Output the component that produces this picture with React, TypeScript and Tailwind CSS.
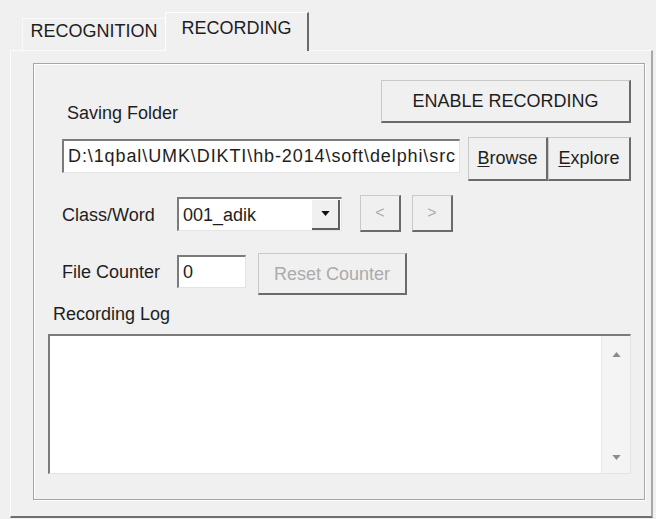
import type { ReactNode } from 'react'

// classic 3D bevels
const raised =
  'border border-t-[#c9c9c9] border-l-[#c9c9c9] border-r-2 border-b-2 border-r-[#6b6b6b] border-b-[#6b6b6b] bg-[#f0f0f0]'
const sunken =
  'border-t-2 border-l-2 border-r border-b border-t-[#7b7b7b] border-l-[#7b7b7b] border-r-[#e4e4e4] border-b-[#e4e4e4] bg-white'

type BtnProps = {
  children: ReactNode
  className?: string
  disabled?: boolean
}

function Btn({ children, className = '', disabled = false }: BtnProps) {
  return (
    <div
      className={`flex shrink-0 items-center justify-center leading-[20px] ${raised} ${
        disabled ? 'text-[#ababab]' : 'text-[#1e1e1e]'
      } ${className}`}
    >
      {children}
    </div>
  )
}

function Triangle({ up = false, className = '' }: { up?: boolean; className?: string }) {
  return (
    <svg viewBox="0 0 10 6" className={className}>
      <path d={up ? 'M0 6 L5 0 L10 6 Z' : 'M0 0 L10 0 L5 6 Z'} fill="currentColor" />
    </svg>
  )
}

export default function App() {
  return (
    <div className="h-[519px] w-[656px] overflow-hidden bg-[#f0f0f0] pt-[12px] pr-[3px] pb-[1px] pl-[10px] font-['Liberation_Sans',Arial,sans-serif] text-[18px] text-[#1e1e1e]">
      <div className="flex h-full flex-col">
        {/* Tab headers */}
        <div className="flex h-[38px] items-end pl-[12px]">
          <div className="flex h-[32px] w-[143px] justify-center border-t border-l border-t-[#fafafa] border-l-[#fafafa] pt-[2px] leading-[20px]">
            RECOGNITION
          </div>
          <div className="relative z-10 -mb-[1px] flex h-[39px] w-[144px] justify-center border-t border-l border-r-2 border-t-white border-l-white border-r-[#6b6b6b] bg-[#f0f0f0] pt-[5px] leading-[20px]">
            RECORDING
          </div>
        </div>

        {/* Tab page */}
        <div className="flex-1 border-t border-l border-r-2 border-b-2 border-t-[#fbfbfb] border-l-[#fbfbfb] border-r-[#a8a8a8] border-b-[#6e6e6e] pt-[12px] pr-[6px] pb-[16px] pl-[22px]">
          <div className="h-full border border-[#a6a6a6] pl-[14px] pr-[13px] shadow-[inset_1px_1px_0_#ffffff,1px_1px_0_#ffffff]">
            {/* Saving folder */}
            <div className="mt-[16px] flex items-start justify-between">
              <div className="mt-[23px] ml-[19px] leading-[20px]">Saving Folder</div>
              <Btn className="h-[43px] w-[250px]">ENABLE RECORDING</Btn>
            </div>

            <div className="mt-[14px] ml-[14px] flex items-start">
              <div className={`mt-[2px] flex h-[34px] w-[398px] items-center pb-[2px] pl-[4px] leading-[20px] tracking-[0.9px] ${sunken}`}>
                D:\1qbal\UMK\DIKTI\hb-2014\soft\delphi\src
              </div>
              <Btn className="ml-[8px] h-[44px] w-[80px] pb-[2px]">
                <span>
                  <u className="underline-offset-2">B</u>rowse
                </span>
              </Btn>
              <Btn className="h-[44px] w-[83px] pb-[2px]">
                <span>
                  <u className="underline-offset-2">E</u>xplore
                </span>
              </Btn>
            </div>

            {/* Class / word selector */}
            <div className="mt-[14px] ml-[14px] flex items-start">
              <div className="mt-[10px] w-[115px] leading-[20px]">Class/Word</div>
              <div className={`mt-[2px] flex h-[34px] w-[165px] items-center ${sunken}`}>
                <div className="flex-1 pl-[4px] leading-[20px]">001_adik</div>
                <div className="mr-[1px] flex h-[30px] w-[28px] items-center justify-center border-r-2 border-b-2 border-r-[#5f5f5f] border-b-[#5f5f5f] bg-[#f0f0f0]">
                  <Triangle className="h-[5px] w-[9px] text-[#111]" />
                </div>
              </div>
              <Btn disabled className="ml-[18px] h-[37px] w-[41px] text-[16px]">
                &lt;
              </Btn>
              <Btn disabled className="ml-[11px] h-[37px] w-[41px] text-[16px]">
                &gt;
              </Btn>
            </div>

            {/* File counter */}
            <div className="mt-[21px] ml-[14px] flex items-start">
              <div className="mt-[9px] w-[115px] leading-[20px]">File Counter</div>
              <div className={`mt-[2px] flex h-[33px] w-[69px] items-center pl-[4px] leading-[20px] ${sunken}`}>0</div>
              <Btn disabled className="ml-[12px] h-[42px] w-[149px]">
                Reset Counter
              </Btn>
            </div>

            {/* Log */}
            <div className="mt-[9px] ml-[5px] leading-[20px]">Recording Log</div>
            <div className={`mt-[10px] flex h-[140px] w-[583px] ${sunken}`}>
              <div className="flex-1" />
              <div className="flex w-[29px] flex-col items-center justify-between border-l border-l-[#e9e9e9] bg-[#f4f4f4] pt-[16px] pb-[13px]">
                <Triangle up className="h-[5px] w-[11px] text-[#8c8c8c]" />
                <Triangle className="h-[5px] w-[11px] text-[#8c8c8c]" />
              </div>
            </div>
          </div>
        </div>
      </div>
    </div>
  )
}
